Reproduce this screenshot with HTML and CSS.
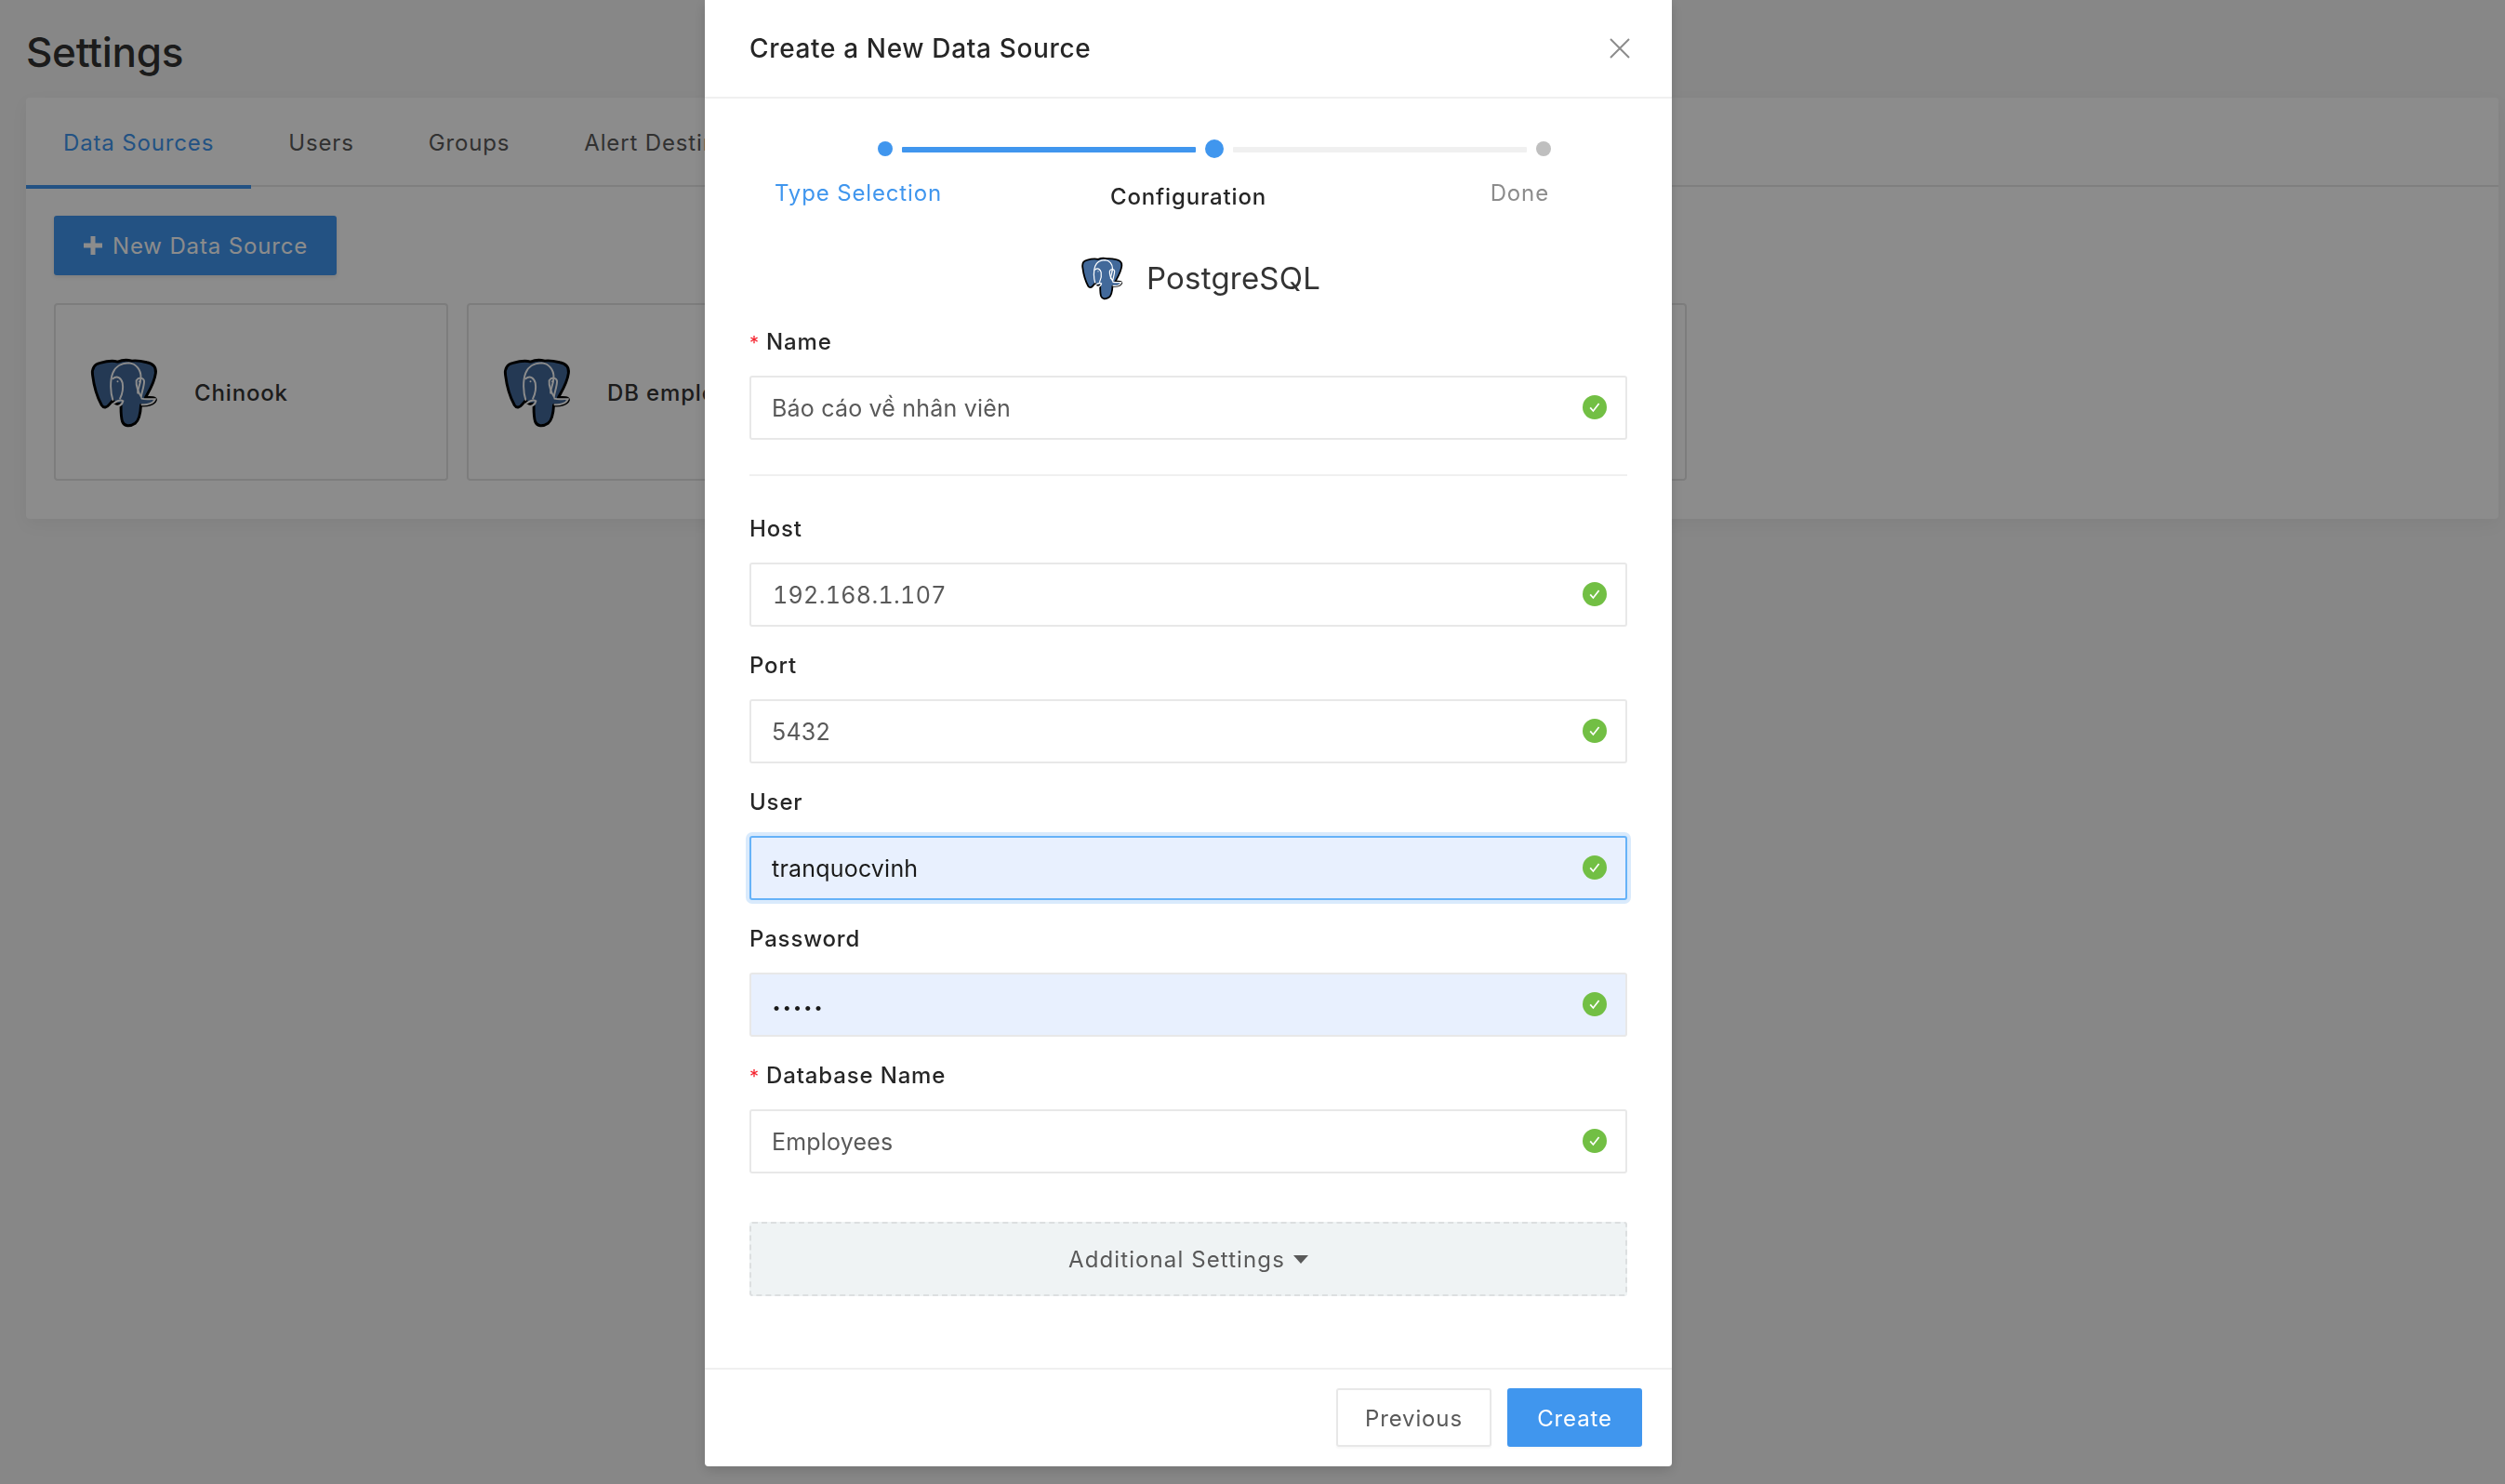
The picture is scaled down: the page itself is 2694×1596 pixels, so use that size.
FILE: index.html
```html
<!DOCTYPE html>
<html lang="en">
<head>
    <meta charset="UTF-8">
    <meta name="viewport" content="width=device-width, initial-scale=1.0">
    <title>Settings</title>
    <link rel="stylesheet" href="styles.css">
</head>
<body>
    <!-- Shared icons -->
    <svg class="icon-defs" width="0" height="0">
        <symbol id="pg" viewBox="-6 -6 228 234">
            <path class="pg-body" d="M30 12C10 16 2 32 5 52C9 85 20 125 35 152C42 163 52 160 60 150L72 136C76 146 90 150 99 148C99 170 98 190 104 207C110 222 128 224 146 212C162 200 164 175 165 152C185 154 208 150 214 135C216 127 200 125 180 127C192 105 210 78 214 45C216 25 205 14 185 10C165 5 150 3 135 5C120 1 100 3 88 8C70 3 48 7 30 12Z"/>
            <path class="pg-line" d="M72 134C64 110 62 70 72 45C80 25 100 12 125 12C150 14 165 35 165 58C165 85 152 100 155 112"/>
            <path class="pg-line" d="M72 64C86 52 100 62 104 78C108 100 102 118 96 130"/>
            <path class="pg-line" d="M150 70C158 58 174 60 176 72C176 90 168 108 166 124C158 112 148 88 150 70Z"/>
            <path class="pg-line" d="M76 145C88 136 100 134 106 138C104 150 92 158 70 158"/>
            <path class="pg-line" d="M168 130C182 134 198 130 212 132C206 146 186 152 168 150"/>
            <circle class="pg-eye" cx="88" cy="73" r="3"/>
            <circle class="pg-eye" cx="160" cy="73" r="3"/>
        </symbol>
        <symbol id="ok" viewBox="0 0 26 26">
            <circle cx="13" cy="13" r="13" fill="#72bf44"/>
            <path d="M8.2 13.4l3.2 3.6 6.2-8" fill="none" stroke="#fff" stroke-width="1.7"/>
        </symbol>
    </svg>

    <div class="page-title">Settings</div>

    <div class="panel">
        <div class="tabs">
            <div class="tab active">Data Sources</div>
            <div class="tab">Users</div>
            <div class="tab">Groups</div>
            <div class="tab">Alert Destinations</div>
        </div>
        <div class="panel-body">
            <div class="new-btn">
                <svg class="plus" viewBox="0 0 20 20"><path d="M7.5 0h5v7.5H20v5h-7.5V20h-5v-7.5H0v-5h7.5z"/></svg>
                New Data Source
            </div>
            <div class="cards">
                <div class="card">
                    <svg class="card-logo"><use href="#pg"/></svg>
                    <span>Chinook</span>
                </div>
                <div class="card">
                    <svg class="card-logo"><use href="#pg"/></svg>
                    <span>DB employees</span>
                </div>
                <div class="card"></div>
                <div class="card"></div>
            </div>
        </div>
    </div>

    <!-- Create data source modal -->
    <div class="overlay">
        <div class="modal">
            <div class="modal-header">
                <div class="modal-title">Create a New Data Source</div>
                <svg class="close" viewBox="0 0 22 22"><path d="M1 1l20 20M21 1L1 21"/></svg>
            </div>

            <div class="modal-body">
                <div class="steps">
                    <div class="dot done"></div>
                    <div class="bar done"></div>
                    <div class="dot current"></div>
                    <div class="bar"></div>
                    <div class="dot"></div>
                </div>
                <div class="step-labels">
                    <div class="step-done">Type Selection</div>
                    <div class="step-current">Configuration</div>
                    <div class="step-wait">Done</div>
                </div>

                <div class="db-type">
                    <svg class="db-logo"><use href="#pg"/></svg>
                    <span>PostgreSQL</span>
                </div>

                <div class="field name-field">
                    <label><span class="req">*</span>Name</label>
                    <div class="input">
                        <span>Báo cáo về nhân viên</span>
                        <svg class="check"><use href="#ok"/></svg>
                    </div>
                </div>
                <div class="divider"></div>
                <div class="field">
                    <label>Host</label>
                    <div class="input">
                        <span class="host-val">192.168.1.107</span>
                        <svg class="check"><use href="#ok"/></svg>
                    </div>
                </div>
                <div class="field">
                    <label>Port</label>
                    <div class="input">
                        <span>5432</span>
                        <svg class="check"><use href="#ok"/></svg>
                    </div>
                </div>
                <div class="field">
                    <label>User</label>
                    <div class="input focused">
                        <span>tranquocvinh</span>
                        <svg class="check"><use href="#ok"/></svg>
                    </div>
                </div>
                <div class="field">
                    <label>Password</label>
                    <div class="input filled">
                        <span class="pw-dots">•••••</span>
                        <svg class="check"><use href="#ok"/></svg>
                    </div>
                </div>
                <div class="field">
                    <label><span class="req">*</span>Database Name</label>
                    <div class="input">
                        <span>Employees</span>
                        <svg class="check"><use href="#ok"/></svg>
                    </div>
                </div>

                <div class="more">
                    Additional Settings
                    <svg class="caret" viewBox="0 0 16 9"><path d="M0 0h16L8 9z"/></svg>
                </div>
            </div>

            <div class="modal-footer">
                <div class="btn">Previous</div>
                <div class="btn primary">Create</div>
            </div>
        </div>
    </div>
</body>
</html>
```

FILE: styles.css
```css
body {
    font-family: Inter, "Noto Sans", sans-serif;
    font-size: 24px;
    letter-spacing: 0.85px;
    margin: 0;
    padding: 0;
    height: 1596px;
    overflow: hidden;
    background-color: #f6f6f6;
    color: #333;
}
.icon-defs {
    display: block;
}
.page-title {
    height: 105px;
    padding-left: 28px;
    box-sizing: border-box;
    font-size: 44px;
    font-weight: 500;
    letter-spacing: -0.3px;
    line-height: 112px;
    color: #323232;
}

/* Page behind the modal */
.panel {
    margin: 0 7px 0 28px;
    height: 453px;
    background: white;
    border-radius: 4px;
    box-shadow: 0 6px 18px rgba(0, 0, 0, 0.05);
}
.tabs {
    display: flex;
    height: 96px;
    border-bottom: 2px solid #e8e8e8;
    box-sizing: border-box;
}
.tab {
    padding: 0 40px;
    line-height: 97px;
    color: #595959;
}
.tab.active {
    color: #4096ee;
    height: 98px;
    box-sizing: border-box;
    border-bottom: 4px solid #4096ee;
}
.panel-body {
    padding: 31px 30px;
}
.new-btn {
    display: flex;
    align-items: center;
    width: 304px;
    height: 64px;
    padding-left: 32px;
    box-sizing: border-box;
    background: #4096ee;
    border-radius: 3px;
    color: white;
    box-shadow: 0 2px 4px rgba(0, 0, 0, 0.1);
}
.plus {
    width: 20px;
    height: 20px;
    margin-right: 11px;
    fill: white;
}
.cards {
    display: flex;
    gap: 20px;
    margin-top: 30px;
}
.card {
    display: flex;
    align-items: center;
    width: 424px;
    height: 191px;
    flex: none;
    box-sizing: border-box;
    padding: 2px 0 0 36px;
    border: 2px solid #e4e4e4;
    border-radius: 4px;
    font-weight: 500;
    white-space: nowrap;
}
.card-logo {
    width: 74px;
    height: 77px;
    margin-right: 39px;
}

/* PostgreSQL elephant */
.pg-body {
    fill: #42699a;
    stroke: #000;
    stroke-width: 9;
    stroke-linejoin: round;
}
.pg-line {
    fill: none;
    stroke: #fff;
    stroke-width: 6;
    stroke-linecap: round;
}
.pg-eye {
    fill: #fff;
}

/* Modal */
.overlay {
    position: fixed;
    top: 0;
    left: 0;
    width: 100%;
    height: 100%;
    background: rgba(0, 0, 0, 0.45);
}
.modal {
    width: 1040px;
    height: 1577px;
    margin-left: 758px;
    display: flex;
    flex-direction: column;
    background: white;
    border-radius: 0 0 4px 4px;
    box-shadow: 0 4px 14px rgba(0, 0, 0, 0.15);
}
.modal-header {
    display: flex;
    justify-content: space-between;
    align-items: center;
    height: 106px;
    padding: 0 45px 0 48px;
    box-sizing: border-box;
    border-bottom: 2px solid #f0f0f0;
    flex: none;
}
.modal-title {
    font-size: 28px;
    font-weight: 500;
    letter-spacing: 0.65px;
    color: #262626;
}
.close {
    width: 22px;
    height: 22px;
    fill: none;
    stroke: #8c8c8c;
    stroke-width: 2;
}
.modal-body {
    flex: 1;
    padding: 44px 48px 0;
}

/* Steps */
.steps {
    display: flex;
    align-items: center;
    gap: 10px;
    height: 20px;
    padding-left: 138px;
}
.dot {
    width: 16px;
    height: 16px;
    border-radius: 50%;
    background: #bfbfbf;
}
.dot.done {
    background: #4096ee;
}
.dot.current {
    width: 20px;
    height: 20px;
    background: #4096ee;
}
.bar {
    width: 316px;
    height: 6px;
    margin-top: 1px;
    border-radius: 1px;
    background: #f0f0f0;
}
.bar.done {
    background: #4096ee;
}
.step-labels {
    display: grid;
    grid-template-columns: 361px 1fr auto;
    align-items: start;
    margin-top: 19px;
    padding: 0 84px 0 27px;
    line-height: 37px;
}
.step-done {
    color: #4096ee;
}
.step-current {
    margin-top: 4px;
    font-weight: 500;
    color: #262626;
}
.step-wait {
    color: #8c8c8c;
}
.db-type {
    display: flex;
    justify-content: center;
    align-items: center;
    height: 44px;
    margin-top: 47px;
    padding-left: 26px;
    font-size: 33px;
    letter-spacing: 0.2px;
    color: #333;
}
.db-logo {
    width: 46px;
    height: 47px;
    margin-right: 25px;
}

/* Form */
.field {
    margin-bottom: 24px;
}
.name-field {
    margin-top: 29px;
    margin-bottom: 37px;
}
label {
    display: block;
    height: 36px;
    margin-bottom: 18px;
    line-height: 36px;
    font-weight: 500;
    color: #262626;
}
.req {
    display: inline-block;
    width: 18px;
    height: 20px;
    line-height: 20px;
    color: #f5222d;
    font-size: 20px;
    font-weight: 400;
}
.input {
    display: flex;
    justify-content: space-between;
    align-items: center;
    height: 69px;
    padding: 0 20px 0 22px;
    box-sizing: border-box;
    border: 2px solid #e8e8e8;
    border-radius: 3px;
    color: #595959;
    font-size: 25px;
    letter-spacing: 0.2px;
}
.host-val {
    margin-left: 1px;
    letter-spacing: 0.35px;
    font-variant-numeric: tabular-nums;
}
.input.focused {
    background: #e8f0fe;
    border-color: #66b2f8;
    box-shadow: 0 0 0 4px rgba(64, 150, 238, 0.2);
    color: #1a1a1a;
}
.input.filled {
    background: #e8f0fe;
    color: #1a1a1a;
}
.pw-dots {
    margin-left: 1px;
    font-size: 16px;
    font-weight: 600;
    letter-spacing: 3.2px;
    padding-top: 4px;
}
.check {
    width: 26px;
    height: 26px;
    margin-top: -1px;
}
.divider {
    height: 2px;
    margin-bottom: 39px;
    background: #f0f0f0;
}
.more {
    display: flex;
    justify-content: center;
    align-items: center;
    gap: 9px;
    height: 80px;
    margin-top: 52px;
    box-sizing: border-box;
    border: 2px dashed #dcdfe0;
    border-radius: 3px;
    background: #eff3f4;
    color: #595959;
    letter-spacing: 1.1px;
}
.caret {
    width: 16px;
    height: 9px;
    fill: #595959;
}

/* Footer */
.modal-footer {
    display: flex;
    justify-content: flex-end;
    gap: 17px;
    padding: 20px 32px 21px;
    border-top: 2px solid #f0f0f0;
    flex: none;
}
.btn {
    display: flex;
    align-items: center;
    justify-content: center;
    width: 167px;
    height: 63px;
    padding-top: 2px;
    box-sizing: border-box;
    border: 2px solid #e8e8e8;
    border-radius: 3px;
    color: #595959;
    box-shadow: 0 2px 2px rgba(0, 0, 0, 0.03);
}
.btn.primary {
    width: 145px;
    background: #4096ee;
    border-color: #4096ee;
    color: white;
}
```
